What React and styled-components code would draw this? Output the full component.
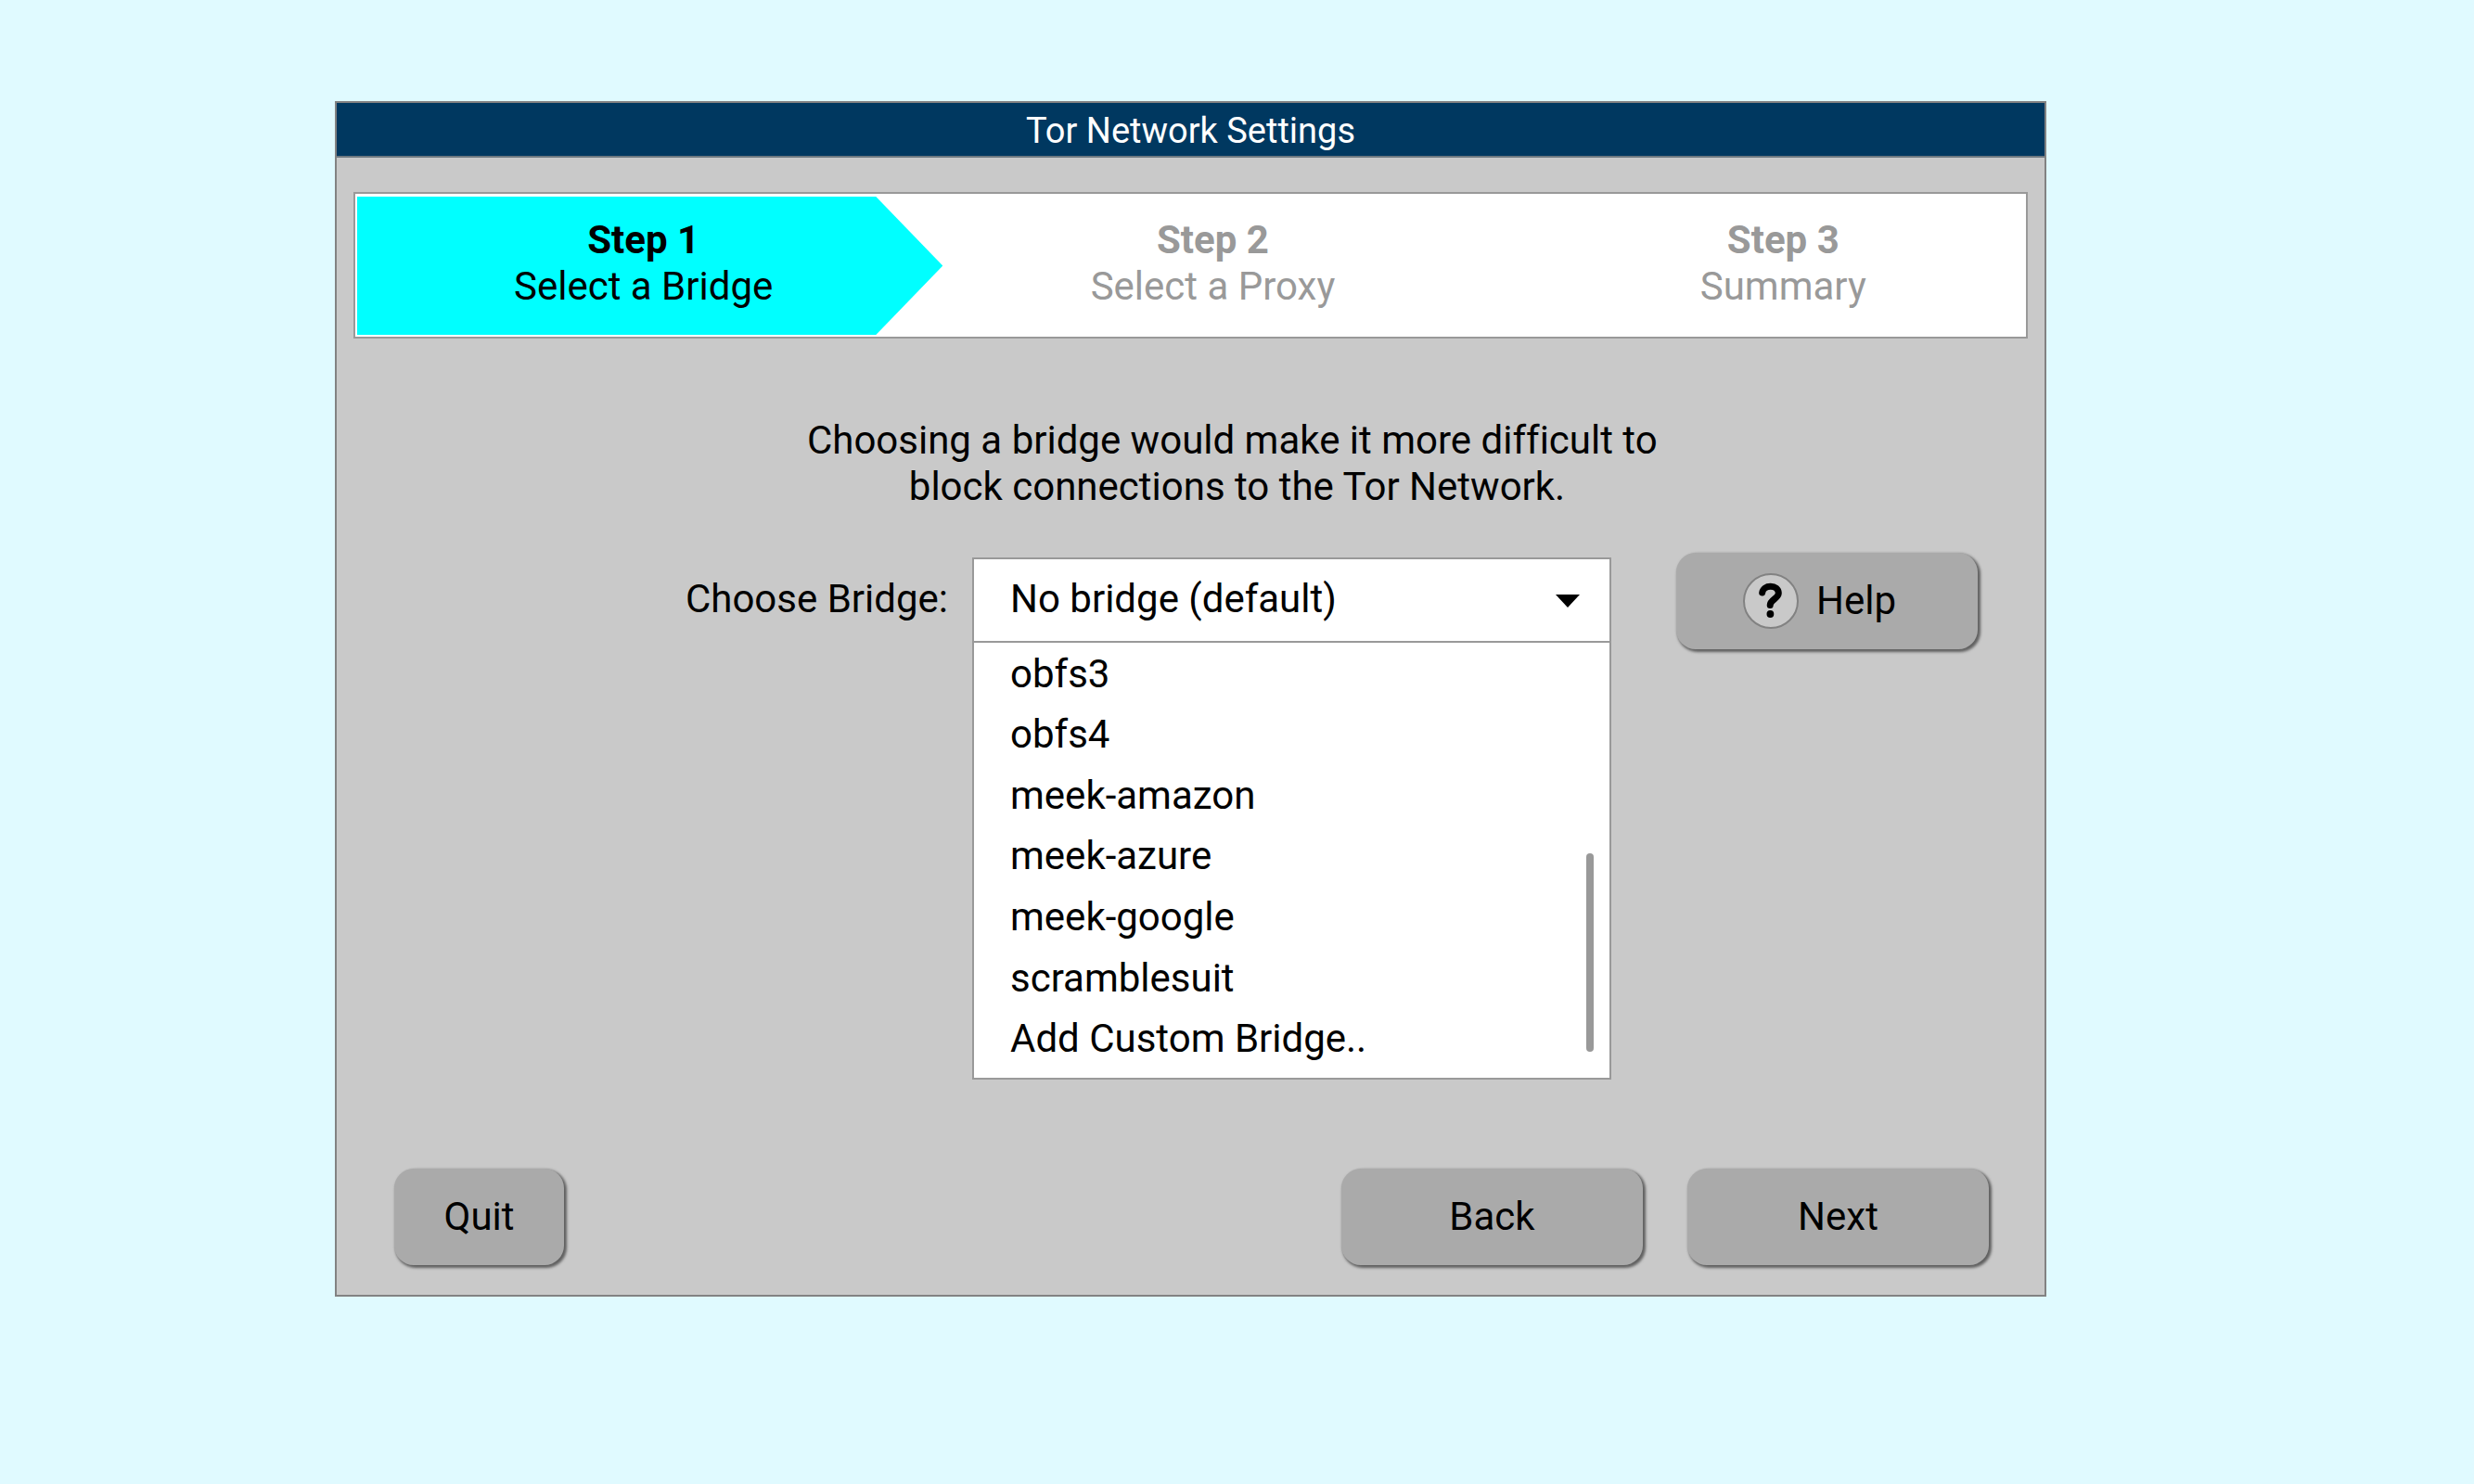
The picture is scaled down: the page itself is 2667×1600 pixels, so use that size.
import React, { useState } from "react";
import styled, { createGlobalStyle } from "styled-components";

const GlobalStyle = createGlobalStyle`
  *, *::before, *::after { box-sizing: border-box; }
  body {
    margin: 0;
    background: #e0faff;
    color: #000;
    font: 400 42px/50px Roboto, "Liberation Sans", sans-serif;
    font-variant-ligatures: none;
  }
`;

const Page = styled.div`
  padding: 109px 461px 80px 361px;
`;

const Window = styled.main`
  border: 2px solid #828282;
  background: #c9c9c9;
`;

const TitleBar = styled.h1`
  margin: 0;
  padding: 5px 0 2px;
  border-bottom: 2px solid #6d7880;
  background: #003860;
  color: #fff;
  font-size: 38px;
  font-weight: 400;
  line-height: 50px;
  text-align: center;
`;

const Steps = styled.ol`
  display: grid;
  grid-template-columns: 632fr 615fr 552fr;
  margin: 37px 18px 0;
  padding: 3px 2px 2px;
  border: 2px solid #999;
  background: #fff;
  list-style: none;
  text-align: center;
`;

const Step = styled.li`
  padding: 22px ${(p) => p.$right || 0}px 27px ${(p) => p.$left || 0}px;
  color: ${(p) => (p.$current ? "#000" : "#999")};
  background: ${(p) => (p.$current ? "#0ff" : "transparent")};
  clip-path: ${(p) =>
    p.$current
      ? "polygon(0 0, calc(100% - 72px) 0, 100% 50%, calc(100% - 72px) 100%, 0 100%)"
      : "none"};
`;

const StepName = styled.strong`
  display: block;
  font-weight: 700;
`;

const Intro = styled.p`
  margin: 85px 0 46px;
  padding-left: 100px;
  text-align: center;
  white-space: pre-wrap;
`;

const BridgeRow = styled.div`
  display: grid;
  grid-template-columns: 685fr 689fr 467fr;
  align-items: start;
`;

const BridgeLabel = styled.label`
  padding: 25px 26px 0 0;
  text-align: right;
`;

const Combo = styled.div`
  margin-top: 5px;
  border: 2px solid #999;
  background: #fff;
`;

const ComboHead = styled.div`
  display: grid;
  align-items: center;
  border-bottom: 2px solid #999;

  & > * {
    grid-area: 1 / 1;
  }
`;

const ComboSelect = styled.select`
  width: 100%;
  height: 88px;
  margin: 0;
  padding: 0 80px 2px 39px;
  border: 0;
  outline: 0;
  appearance: none;
  background: transparent;
  color: inherit;
  font: inherit;
`;

const Caret = styled.svg`
  justify-self: end;
  width: 26px;
  height: 14px;
  margin: 2px 32px 0 0;
  pointer-events: none;
`;

const ListArea = styled.div`
  display: flex;
  height: 469px;
  padding: 1px 17px 9px 0;
`;

const OptionList = styled.ul`
  flex: 1;
  display: grid;
  grid-auto-rows: 1fr;
  align-items: center;
  margin: 0;
  padding: 0;
  list-style: none;
`;

const Option = styled.li`
  padding-left: 39px;
  cursor: pointer;
`;

const ScrollThumb = styled.div`
  align-self: flex-end;
  width: 8px;
  height: 214px;
  margin-bottom: 19px;
  border-radius: 4px;
  background: #999;
`;

const Button = styled.button`
  display: flex;
  align-items: center;
  justify-content: center;
  gap: 19px;
  width: ${(p) => (p.$small ? 183 : 325)}px;
  height: 104px;
  margin: 0;
  padding: 0 ${(p) => (p.$icon ? 16 : 0)}px 0 0;
  border: 0;
  border-radius: 21px;
  background: #aaa;
  box-shadow: 2px 2px 3px 1px #606060;
  color: inherit;
  font: inherit;
`;

const HelpCell = styled.div`
  padding-left: 70px;
`;

const HelpIcon = styled.svg`
  width: 60px;
  height: 60px;
`;

const Footer = styled.footer`
  display: flex;
  gap: 48px;
  padding: 96px 60px 32px 62px;
`;

const Spacer = styled.div`
  flex: 1;
`;

const bridges = [
  "obfs3",
  "obfs4",
  "meek-amazon",
  "meek-azure",
  "meek-google",
  "scramblesuit",
  "Add Custom Bridge..",
];

const NO_BRIDGE = "No bridge (default)";

export default function App() {
  const [bridge, setBridge] = useState(NO_BRIDGE);

  return (
    <>
      <GlobalStyle />
      <Page>
        <Window>
          <TitleBar>Tor Network Settings</TitleBar>
          <Steps>
            <Step $current $right={14} aria-current="step">
              <StepName>Step 1</StepName>
              Select a Bridge
            </Step>
            <Step $right={32}>
              <StepName>Step 2</StepName>
              Select a Proxy
            </Step>
            <Step $left={32}>
              <StepName>Step 3</StepName>
              Summary
            </Step>
          </Steps>
          <Intro>
            {"Choosing a bridge would make it more difficult to \nblock connections to the Tor Network."}
          </Intro>
          <BridgeRow>
            <BridgeLabel htmlFor="bridge">Choose Bridge:</BridgeLabel>
            <Combo>
              <ComboHead>
                <ComboSelect
                  id="bridge"
                  value={bridge}
                  onChange={(e) => setBridge(e.target.value)}
                >
                  {[NO_BRIDGE, ...bridges].map((name) => (
                    <option key={name}>{name}</option>
                  ))}
                </ComboSelect>
                <Caret viewBox="0 0 26 14" aria-hidden="true">
                  <path d="M0 0H26L13 14Z" />
                </Caret>
              </ComboHead>
              <ListArea>
                <OptionList role="listbox" aria-label="Bridges">
                  {bridges.map((name) => (
                    <Option
                      key={name}
                      role="option"
                      aria-selected={bridge === name}
                      onClick={() => setBridge(name)}
                    >
                      {name}
                    </Option>
                  ))}
                </OptionList>
                <ScrollThumb />
              </ListArea>
            </Combo>
            <HelpCell>
              <Button type="button" $icon>
                <HelpIcon viewBox="0 0 60 60" fill="none" aria-hidden="true">
                  <circle cx="30" cy="30" r="29" fill="#c9c9c9" stroke="#828282" strokeWidth="2" />
                  <path
                    d="M20.7 21C21.4 16.6 25 14.3 29.7 14.3C34.6 14.3 38.3 17 38.3 21.6C38.3 27.4 29.2 28.4 29.2 34.6"
                    stroke="#000"
                    strokeWidth="7"
                    strokeLinecap="round"
                  />
                  <circle cx="29.4" cy="44" r="3.9" fill="#000" />
                </HelpIcon>
                Help
              </Button>
            </HelpCell>
          </BridgeRow>
          <Footer>
            <Button type="button" $small>Quit</Button>
            <Spacer />
            <Button type="button">Back</Button>
            <Button type="button">Next</Button>
          </Footer>
        </Window>
      </Page>
    </>
  );
}
